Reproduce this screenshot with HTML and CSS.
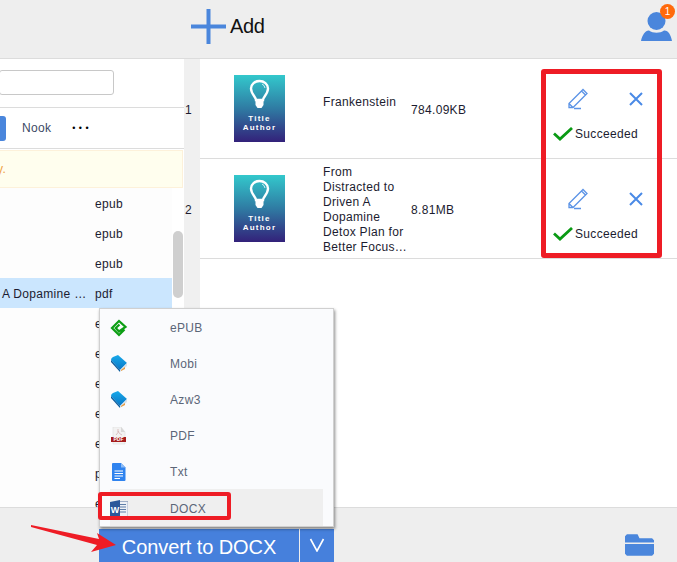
FILE: index.html
```html
<!DOCTYPE html>
<html lang="en">
<head>
<meta charset="utf-8">
<title>Convert to DOCX</title>
<link rel="stylesheet" href="styles.css">
</head>
<body>
<svg class="defs" width="0" height="0" aria-hidden="true">
  <defs>
    <linearGradient id="book" x1="0" y1="0" x2="0" y2="1">
      <stop offset="0" stop-color="#17a9ea"/>
      <stop offset="1" stop-color="#0a77c6"/>
    </linearGradient>
    <symbol id="pencil" viewBox="0 0 22 22">
      <path d="M2 15.500 14.500 3l1.500-1.500 4 4L18.500 7 6 19.500H2Z M14.500 3l4 4 M2 15.500l4 4 M7 20.500h7" fill="none" stroke="#5b93e6" stroke-width="1.300"/>
    </symbol>
    <symbol id="cross" viewBox="0 0 16 16">
      <path d="M2 2 14 14M14 2 2 14" fill="none" stroke="#4a8ae6" stroke-width="2"/>
    </symbol>
    <symbol id="check" viewBox="0 0 20 14">
      <path d="M1 6.500l6 5.500L19 1" fill="none" stroke="#0a9a14" stroke-width="2.800"/>
    </symbol>
    <symbol id="mobi" viewBox="0 0 18 18">
      <path d="M1 5Q1 3 3 2L8 0l9 8-7 7Z" fill="url(#book)"/>
      <path d="M1 5v2l9 10 0-2Z" fill="#0a5c9e"/>
      <path d="M10 15l7-7v3l-7 6Z" fill="#d9e2ea"/>
      <path d="M11 15l4-3v2l-4 2Z" fill="#e89a3c"/>
    </symbol>
  </defs>
</svg>
<div class="app">
  <header class="topbar">
    <button class="add">
      <svg class="add-icon" width="35" height="35" viewBox="0 0 35 35"><path d="M0 17.500H35M17.500 0V35" stroke="#4a86dc" stroke-width="4"/></svg>
      <span>Add</span>
    </button>
    <div class="user">
      <svg width="32" height="32" viewBox="0 0 32 32"><circle cx="15.500" cy="11" r="9" fill="#4a86dc"/><path d="M0 31C1 25 5 20 8 20.500 12 23.500 19 23.500 23 20.500 27 20 30 25 31 31Z" fill="#4a86dc"/></svg>
      <span class="badge">1</span>
    </div>
  </header>
  <main class="body">
    <section class="library">
      <div class="search-row"><div class="search"></div></div>
      <div class="tabs">
        <span class="tab-active"></span>
        <span class="tab">Nook</span>
        <span class="dots">•••</span>
      </div>
      <div class="notice">y.</div>
      <div class="files">
        <div class="file"><span class="file-name"></span><span>epub</span></div>
        <div class="file"><span class="file-name"></span><span>epub</span></div>
        <div class="file"><span class="file-name"></span><span>epub</span></div>
        <div class="file selected"><span class="file-name">A Dopamine …</span><span>pdf</span></div>
        <div class="file"><span class="file-name"></span><span>epub</span></div>
        <div class="file"><span class="file-name"></span><span>epub</span></div>
        <div class="file"><span class="file-name"></span><span>epub</span></div>
        <div class="file"><span class="file-name"></span><span>epub</span></div>
        <div class="file"><span class="file-name"></span><span>epub</span></div>
        <div class="file"><span class="file-name"></span><span>pdf</span></div>
        <div class="file"><span class="file-name"></span><span>epub</span></div>
      </div>
      <div class="scrollbar"></div>
    </section>
    <div class="numbers">
      <div class="number">1</div>
      <div class="number">2</div>
    </div>
    <section class="queue">
      <article class="job">
        <div class="cover">
          <svg class="cover-bulb" width="21" height="31" viewBox="0 0 21 31"><path d="M7 21C7 18 2 15 2 9.500 2 5 6 2 10.500 2S19 5 19 9.500C19 15 14 18 14 21Z" fill="none" stroke="#fff" stroke-width="2.400"/><path d="M6.500 21h8v5l-2 3H8.500l-2-3Z" fill="#fff"/><path d="M13 5q2.500 1 3 4" fill="none" stroke="#fff" stroke-width=".8"/></svg>
          <span class="cover-title">Title</span>
          <span class="cover-author">Author</span>
        </div>
        <div class="title top">Frankenstein</div>
        <div class="size">784.09KB</div>
        <div class="actions">
          <div class="action-icons">
            <svg width="22" height="22"><use href="#pencil"/></svg>
            <svg width="16" height="16"><use href="#cross"/></svg>
          </div>
          <div class="status"><svg width="20" height="14"><use href="#check"/></svg><span>Succeeded</span></div>
        </div>
      </article>
      <article class="job">
        <div class="cover">
          <svg class="cover-bulb" width="21" height="31" viewBox="0 0 21 31"><path d="M7 21C7 18 2 15 2 9.500 2 5 6 2 10.500 2S19 5 19 9.500C19 15 14 18 14 21Z" fill="none" stroke="#fff" stroke-width="2.400"/><path d="M6.500 21h8v5l-2 3H8.500l-2-3Z" fill="#fff"/><path d="M13 5q2.500 1 3 4" fill="none" stroke="#fff" stroke-width=".8"/></svg>
          <span class="cover-title">Title</span>
          <span class="cover-author">Author</span>
        </div>
        <div class="title">From Distracted to Driven A Dopamine Detox Plan for Better Focus…</div>
        <div class="size">8.81MB</div>
        <div class="actions">
          <div class="action-icons">
            <svg width="22" height="22"><use href="#pencil"/></svg>
            <svg width="16" height="16"><use href="#cross"/></svg>
          </div>
          <div class="status"><svg width="20" height="14"><use href="#check"/></svg><span>Succeeded</span></div>
        </div>
      </article>
    </section>
  </main>
  <footer class="footer">
    <div class="convert">
      <button class="convert-main">Convert to DOCX</button>
      <button class="convert-more"><svg width="16" height="14" viewBox="0 0 16 14"><path d="M1.500 1 8 13 14.500 1" fill="none" stroke="#fff" stroke-width="1.600"/></svg></button>
    </div>
    <svg class="folder" width="29" height="22" viewBox="0 0 30 22"><path d="M0 2 2 0H13L15 4H28L30 6V8.500H0ZM0 10H30V20L28 22H2L0 20Z" fill="#4a86dc"/></svg>
  </footer>
</div>

<ul class="menu">
  <li class="menu-item">
    <svg width="18" height="18" viewBox="0 0 18 18"><path d="M14.500 10.500 9 16 2 9 9 2 15.500 8 9 12.500 5.800 9 9.500 5.500" fill="none" stroke="#0c9e14" stroke-width="2.200"/></svg>
    <span>ePUB</span>
  </li>
  <li class="menu-item">
    <svg width="18" height="18"><use href="#mobi"/></svg>
    <span>Mobi</span>
  </li>
  <li class="menu-item">
    <svg width="18" height="18"><use href="#mobi"/></svg>
    <span>Azw3</span>
  </li>
  <li class="menu-item">
    <svg width="18" height="18" viewBox="0 0 18 18"><path d="M3 0H11L15 5V17H3Z" fill="#f2f2f2" stroke="#ddd" stroke-width=".6"/><path d="M11 0V5H15" fill="#d8d8d8"/><path d="M1 10H16V15H1Z" fill="#a61c1c"/><path d="M8 2q1 4-2 6M8 4q1 3 4 4" fill="none" stroke="#c9a0a0" stroke-width=".6"/><text class="pdf-label" x="8.500" y="14.400">PDF</text></svg>
    <span>PDF</span>
  </li>
  <li class="menu-item">
    <svg width="18" height="18" viewBox="0 0 18 18"><path d="M3 0H11L15.500 4.500V17Q15.500 18 14.500 18H3Q2 18 2 17V1Q2 0 3 0Z" fill="#2f83ef"/><path d="M11 0V4.500H15.500" fill="#8ebcf5"/><path d="M4.500 8H13M4.500 10.500H13M4.500 13H13M4.500 15.500H10" stroke="#fff"/></svg>
    <span>Txt</span>
  </li>
  <li class="menu-item hovered">
    <svg width="18" height="18" viewBox="0 0 18 18"><path d="M7 1.500H18V16.500H7Z" fill="#eef1f6" stroke="#8da0bd" stroke-width=".8"/><path d="M9 4.500H16M9 7H16M9 9.500H16M9 12H16" stroke="#5f7ea8" stroke-width="1.100"/><path d="M0 2 10 0V18L0 16Z" fill="#2b579a"/><text class="word-label" x="5" y="12.500">W</text></svg>
    <span>DOCX</span>
  </li>
</ul>
<div class="mark mark-docx"></div>
<div class="mark mark-actions"></div>
<svg class="arrow" width="90" height="32" viewBox="0 0 90 32"><path d="M0 1 68 15 66 9 85 21 60 28 66 21 0 3Z" fill="#ee1c25"/></svg>
</body>
</html>
```
FILE: styles.css
```css
* { box-sizing: border-box; }
html, body { margin: 0; height: 100%; overflow: hidden; }
body {
  font-family: "Liberation Sans", Arial, sans-serif;
  font-size: 12px;
  letter-spacing: 0.32px;
  color: #1c1c30;
  background: #fff;
}
.defs { position: absolute; }
.app { display: flex; flex-direction: column; height: 562px; }

.topbar {
  display: flex;
  justify-content: space-between;
  height: 59px;
  padding: 9px 4px 0 190px;
  background: #eeeeee;
  border-bottom: 1px solid #dcdcdc;
  flex: none;
}
.add {
  display: flex;
  align-items: center;
  gap: 4px;
  height: 35px;
  padding: 0;
  border: 0;
  background: none;
  font: 20px "Liberation Sans", Arial, sans-serif;
  letter-spacing: -0.4px;
  color: #111;
}
.add-icon { margin-left: 1px; }
.user { position: relative; width: 32px; height: 32px; margin-top: 1px; }
.user svg { display: block; }
.badge {
  position: absolute;
  top: -6px;
  right: -2px;
  width: 15px;
  height: 15px;
  border-radius: 50%;
  background: #ff6a0c;
  color: #fff;
  font-size: 10px;
  letter-spacing: 0;
  line-height: 15px;
  text-align: center;
}

.body { display: flex; flex: 1; min-height: 0; }

.library { position: relative; width: 184px; flex: none; overflow: hidden; }
.search-row { height: 49px; padding-top: 11px; border-bottom: 1px solid #dcdcdc; }
.search {
  width: 115px;
  height: 25px;
  margin-left: -1px;
  border: 1px solid #c8c8c8;
  border-radius: 3px;
}
.tabs {
  display: flex;
  align-items: center;
  height: 41px;
  border-bottom: 1px solid #dcdcdc;
}
.tab-active { width: 6px; height: 25px; background: #4a86dc; border-radius: 0 3px 3px 0; }
.tab { margin-left: 16px; color: #3c4a66; }
.dots { margin-left: 21px; font-size: 9px; letter-spacing: 3.4px; color: #000; }
.notice {
  height: 38px;
  margin: 1px 1px 0 -5px;
  padding-left: 1px;
  line-height: 37px;
  background: #fffeee;
  border: 1px solid #fdf1da;
  color: #f0a040;
}
.files { background: #fdfdfd; width: 172px; height: 320px; }
.file { display: flex; height: 30px; padding-top: 1px; line-height: 30px; }
.file-name { width: 95px; padding-left: 2px; white-space: nowrap; flex: none; }
.selected { background: #cbe6fe; }
.scrollbar {
  position: absolute;
  top: 172px;
  left: 173px;
  width: 10px;
  height: 67px;
  border-radius: 5px;
  background: #cfcfcf;
}

.numbers { width: 16px; flex: none; background: #f0f0f0; }
.number { height: 100px; padding: 41px 0 0 1px; line-height: 20px; letter-spacing: 0; }

.queue { flex: 1; min-width: 0; }
.job {
  display: flex;
  align-items: center;
  height: 100px;
  padding-left: 34px;
  border-bottom: 1px solid #dcdcdc;
}
.cover {
  position: relative;
  display: flex;
  flex-direction: column;
  align-items: center;
  width: 51px;
  height: 67px;
  padding-top: 4px;
  flex: none;
  background: linear-gradient(#33c8cc, #2f7ba3 50%, #33217a);
  color: #fff;
  font-size: 8px;
  font-weight: bold;
  line-height: 9px;
  letter-spacing: 1.2px;
}
.cover-bulb { flex: none; margin-bottom: 4px; }
.title {
  width: 88px;
  margin-left: 38px;
  margin-top: 2px;
  line-height: 15px;
  flex: none;
}
.title.top { margin-top: -13px; }
.size { width: 130px; flex: none; margin-top: 2px; }
.actions { width: 96px; flex: none; margin-top: 11px; }
.action-icons { display: flex; align-items: center; gap: 39px; padding-left: 26px; margin-bottom: 17px; }
.action-icons svg { display: block; flex: none; }
.status { display: flex; align-items: center; gap: 2px; padding-left: 12px; white-space: nowrap; }
.status svg { flex: none; }

.footer {
  display: flex;
  justify-content: space-between;
  align-items: flex-end;
  flex: none;
  height: 55px;
  padding: 0 23px 6px 99px;
  background: #eeeeee;
  border-top: 1px solid #dcdcdc;
}
.convert { display: flex; height: 33px; margin-bottom: -6px; }
.convert-main, .convert-more {
  height: 33px;
  border: 0;
  padding: 0;
  background: #4680dc;
  color: #fff;
  font: 20px "Liberation Sans", Arial, sans-serif;
}
.convert-main { width: 200px; padding-top: 4px; letter-spacing: -0.08px; }
.convert-more { width: 34px; margin-left: 1px; }
.folder { display: block; }

.menu {
  position: absolute;
  top: 308px;
  left: 99px;
  width: 235px;
  height: 219px;
  margin: 0;
  padding: 1px 10px 0 10px;
  list-style: none;
  background: #fafbfd;
  border: 1px solid #d0d0d0;
  box-shadow: 1px 2px 3px rgba(0, 0, 0, 0.45);
}
.menu-item {
  display: flex;
  align-items: center;
  height: 36px;
  color: #5b6678;
}
.menu-item svg { flex: none; width: 18px; }
.menu-item span { margin-left: 42px; }
.hovered { background: #efefef; height: 37px; margin-top: -1px; padding-top: 2px; }
.pdf-label { font: bold 5px "Liberation Sans", Arial, sans-serif; letter-spacing: 0; fill: #fff; text-anchor: middle; }
.word-label { font: bold 9px "Liberation Sans", Arial, sans-serif; letter-spacing: 0; fill: #fff; text-anchor: middle; }

.mark { position: absolute; border: 5px solid #ee1c25; border-radius: 3px; }
.mark-docx { top: 492px; left: 98px; width: 133px; height: 28px; border-width: 4px; }
.mark-actions { top: 69px; left: 541px; width: 121px; height: 189px; }
.arrow { position: absolute; top: 524px; left: 31px; }
```
